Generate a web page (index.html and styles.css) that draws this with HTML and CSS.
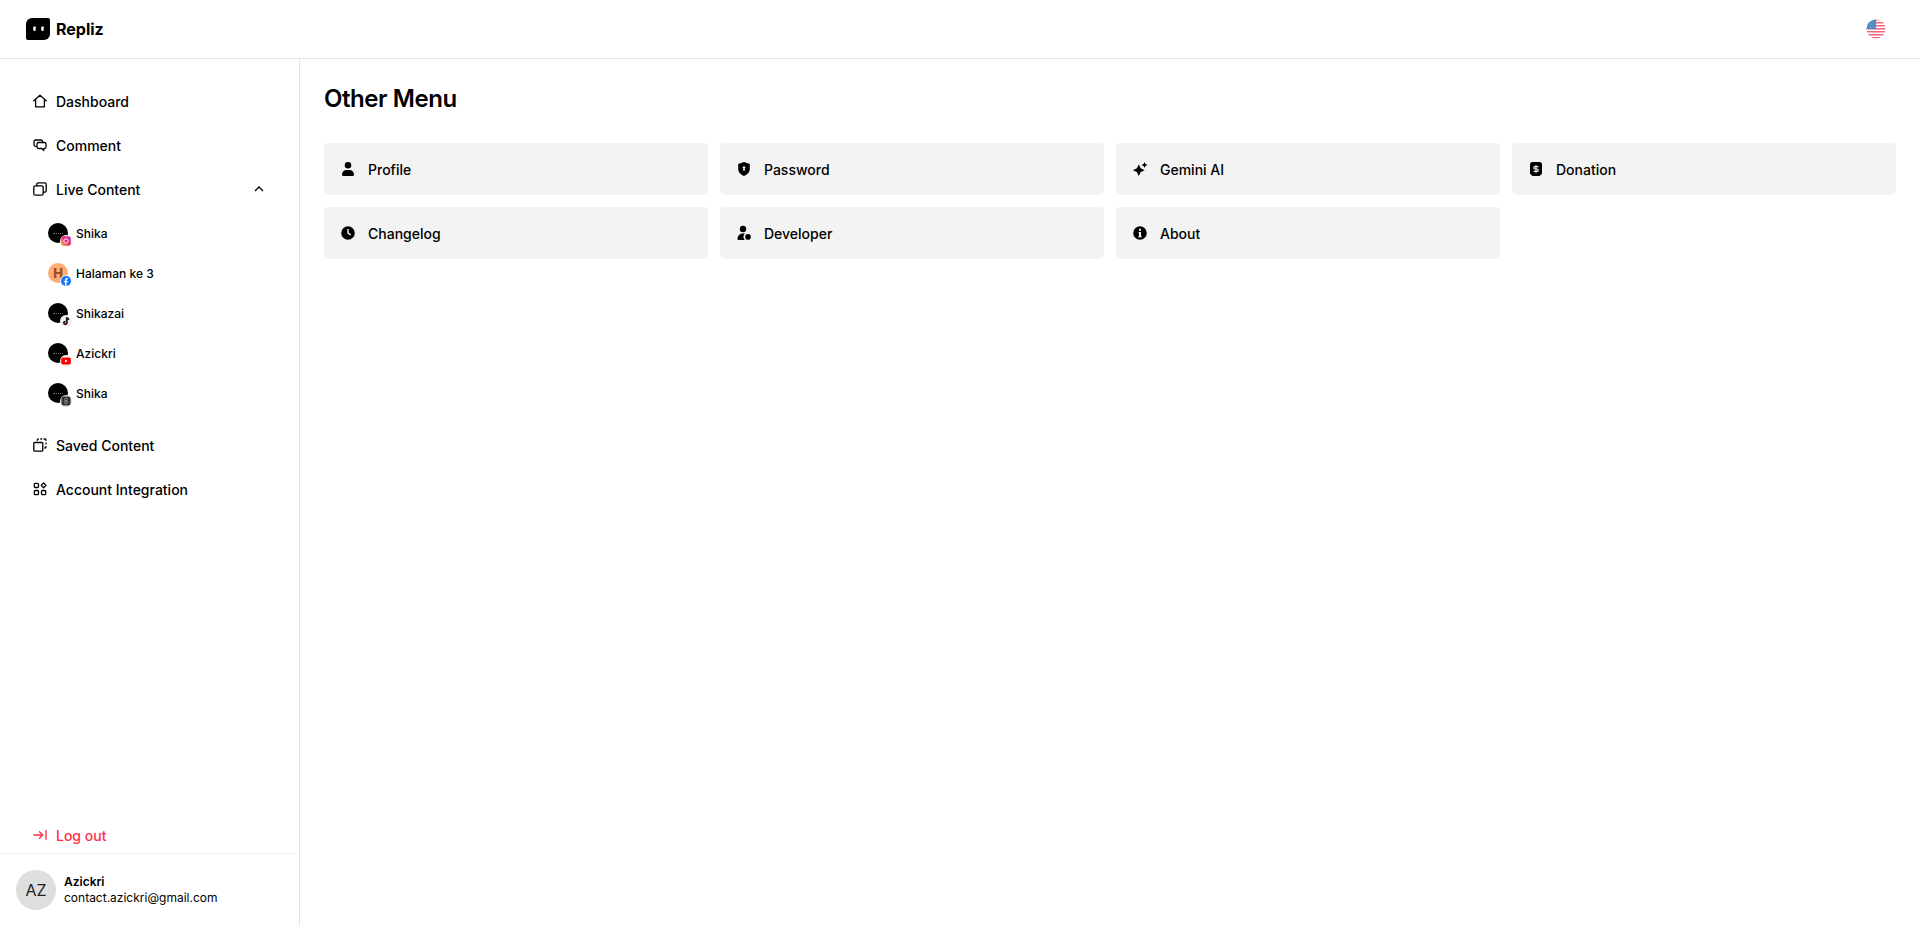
FILE: index.html
```html
<!DOCTYPE html>
<html lang="en">
<head>
<meta charset="utf-8">
<title>Repliz</title>
<link rel="stylesheet" href="styles.css">
</head>
<body>
<header class="topbar">
  <div class="brand">
    <svg class="logo" viewBox="0 0 24 22" width="24" height="22"><path d="M6 0h16a2 2 0 0 1 2 2v14a6 6 0 0 1-6 6H2a2 2 0 0 1-2-2V6a6 6 0 0 1 6-6z" fill="#000"/><rect x="7.300" y="8.500" width="2.400" height="4.400" rx=".8" fill="#fff"/><rect x="15.300" y="8.500" width="2.400" height="4.400" rx=".8" fill="#fff"/></svg>
    <span class="brand-name">Repliz</span>
  </div>
  <svg class="flag" viewBox="0 0 20 20" width="20" height="20">
    <defs><clipPath id="flagclip"><circle cx="10" cy="10" r="9.500"/></clipPath></defs>
    <g clip-path="url(#flagclip)">
      <rect width="20" height="20" fill="#fff"/>
      <g fill="#f0647a"><rect y="0" width="20" height="1.500"/><rect y="3" width="20" height="1.500"/><rect y="6" width="20" height="1.500"/><rect y="9" width="20" height="1.500"/><rect y="12" width="20" height="1.500"/><rect y="15" width="20" height="1.500"/><rect y="18" width="20" height="1.500"/></g>
      <rect width="10" height="10" fill="#4a86c0"/>
      <g fill="#a9c8e6"><circle cx="3" cy="7" r=".6"/><circle cx="5" cy="5" r=".6"/><circle cx="7" cy="3" r=".6"/><circle cx="7" cy="7" r=".6"/><circle cx="3" cy="3.500" r=".6"/><circle cx="5" cy="8.500" r=".6"/><circle cx="9" cy="5" r=".6"/><circle cx="9" cy="8.500" r=".6"/></g>
    </g>
  </svg>
</header>
<div class="shell">
  <aside class="sidebar">
    <nav class="nav">
      <a class="nav-item"><svg class="nav-icon" viewBox="0 0 14 14"><path d="M.8 6.800 7 1.200l6.200 5.600M2.600 5.400v7.400h8.800V5.400"/></svg><span>Dashboard</span></a>
      <a class="nav-item"><svg class="nav-icon" viewBox="0 0 14 14"><path d="M9.500 3.800v-.3A1.500 1.500 0 0 0 8 2H2.500A1.500 1.500 0 0 0 1 3.500v3.300a1.500 1.500 0 0 0 1.500 1.500h1"/><path d="M5.500 4.500h6A1.500 1.500 0 0 1 13 6v3a1.500 1.500 0 0 1-1.500 1.500h-.7V12.500L8.800 10.500H5.500A1.500 1.500 0 0 1 4 9V6a1.500 1.500 0 0 1 1.500-1.500z"/></svg><span>Comment</span></a>
      <a class="nav-item"><svg class="nav-icon" viewBox="0 0 14 14"><rect x=".8" y="3.800" width="9.400" height="9.400" rx="1.500"/><path d="M3.800 3.800V2.300A1.500 1.500 0 0 1 5.300.8h6.400a1.500 1.500 0 0 1 1.500 1.500v6.400a1.500 1.500 0 0 1-1.500 1.500h-1.500"/></svg><span class="grow">Live Content</span><svg class="chevron" viewBox="0 0 12 12"><path d="M2 8l4-4 4 4"/></svg></a>
      <div class="sub">
        <a class="sub-item"><span class="avatar-wrap"><span class="pic"><span class="scribble"></span></span><span class="badge"><svg viewBox="0 0 10 10"><defs><linearGradient id="ig" x1="0" y1="1" x2="1" y2="0"><stop offset="0" stop-color="#fdb32b"/><stop offset=".5" stop-color="#f0276f"/><stop offset="1" stop-color="#b832c9"/></linearGradient></defs><rect x=".2" y=".2" width="9.600" height="9.600" rx="2.500" fill="url(#ig)"/><circle cx="5" cy="5" r="2.200" fill="none" stroke="#fff" stroke-width=".9"/></svg></span></span><span>Shika</span></a>
        <a class="sub-item"><span class="avatar-wrap"><span class="pic pic-h">H</span><span class="badge"><svg viewBox="0 0 10 10"><circle cx="5" cy="5" r="5" fill="#1877f2"/><path d="M5.500 10V6.300h1.200l.2-1.400H5.500V4c0-.4.200-.7.700-.7h.8V2.100c-.3 0-.7-.1-1-.1-1.100 0-1.900.7-1.900 1.900v1H3v1.400h1.100V10z" fill="#fff"/></svg></span></span><span>Halaman ke 3</span></a>
        <a class="sub-item"><span class="avatar-wrap"><span class="pic"><span class="scribble"></span></span><span class="badge"><svg viewBox="0 0 10 10"><path d="M5.800 1v5.500a1.500 1.500 0 1 1-1.500-1.500M5.800 1c.2 1.200 1 1.900 2.200 2" fill="none" stroke="#25e3de" stroke-width="1.300" transform="translate(-.5 .3)"/><path d="M5.800 1v5.500a1.500 1.500 0 1 1-1.500-1.500M5.800 1c.2 1.200 1 1.900 2.200 2" fill="none" stroke="#fb2c55" stroke-width="1.300" transform="translate(.5 .3)"/><path d="M5.800 1v5.500a1.500 1.500 0 1 1-1.500-1.500M5.800 1c.2 1.200 1 1.900 2.200 2" fill="none" stroke="#000" stroke-width="1.200" transform="translate(0 .3)"/></svg></span></span><span>Shikazai</span></a>
        <a class="sub-item"><span class="avatar-wrap"><span class="pic"><span class="scribble"></span></span><span class="badge"><svg viewBox="0 0 10 10"><rect x=".2" y="1.500" width="9.600" height="7" rx="1.800" fill="#f00"/><path d="M4 3.500v3L6.700 5z" fill="#fff"/></svg></span></span><span>Azickri</span></a>
        <a class="sub-item"><span class="avatar-wrap"><span class="pic"><span class="scribble"></span></span><span class="badge badge-dark"><svg viewBox="0 0 10 10"><rect x=".5" y=".5" width="9" height="9" rx="2" fill="#333"/><circle cx="5" cy="3.600" r="1.400" fill="none" stroke="#aaa" stroke-width=".7"/><circle cx="5" cy="6.400" r="1.400" fill="none" stroke="#aaa" stroke-width=".7"/></svg></span></span><span>Shika</span></a>
      </div>
      <a class="nav-item"><svg class="nav-icon" viewBox="0 0 14 14"><path d="M9.800 5.500v6.700a1 1 0 0 1-1 1H1.800a1 1 0 0 1-1-1V5.500a1 1 0 0 1 1-1h7a1 1 0 0 1 1 1z"/><path d="M4.300 2.300V2a1 1 0 0 1 1-1M7.800 1h.8M11 1h1a1 1 0 0 1 1 1v.4M13 5v.8M13 8.400V9a1 1 0 0 1-1 1h-.2"/></svg><span>Saved Content</span></a>
      <a class="nav-item"><svg class="nav-icon" viewBox="0 0 14 14"><rect x="1.300" y="1.300" width="4.200" height="4.200" rx="1"/><rect x="1.300" y="8.500" width="4.200" height="4.200" rx="1"/><rect x="8.500" y="8.500" width="4.200" height="4.200" rx="1"/><path d="M10.600 1 13 3.400l-2.400 2.400-2.400-2.400z"/></svg><span>Account Integration</span></a>
    </nav>
    <a class="logout"><svg class="nav-icon" viewBox="0 0 14 14"><path d="M1 7h8.500M6.500 3.800 9.700 7l-3.200 3.200M13 2.500v9"/></svg><span>Log out</span></a>
    <div class="account">
      <span class="account-avatar">AZ</span>
      <div class="account-text">
        <div class="account-name">Azickri</div>
        <div class="account-mail">contact.azickri@gmail.com</div>
      </div>
    </div>
  </aside>
  <main class="content">
    <h1 class="title">Other Menu</h1>
    <div class="grid">
      <a class="card"><svg class="card-icon" viewBox="0 0 16 16"><circle cx="8" cy="4.300" r="3.300"/><path d="M3.500 15A1.500 1.500 0 0 1 2 13.500C2 11 4 9 6.500 9h3C12 9 14 11 14 13.500a1.500 1.500 0 0 1-1.500 1.500z"/></svg><span>Profile</span></a>
      <a class="card"><svg class="card-icon" viewBox="0 0 16 16"><path fill-rule="evenodd" d="M8 1 13.800 3v4.800c0 3.500-2.500 6-5.800 7.200-3.300-1.200-5.800-3.700-5.800-7.200V3zM8 5.200a1.300 1.300 0 0 0-.7 2.400V10h1.400V7.600A1.300 1.300 0 0 0 8 5.200z"/></svg><span>Password</span></a>
      <a class="card"><svg class="card-icon" viewBox="0 0 16 16"><path d="M6.800 3.500 8.700 7.300l4 1.900-4 1.900-1.900 3.900-1.900-3.900-4-1.900 4-1.900z"/><path d="M12.500 1l.9 2.100 2.100.9-2.100.9-.9 2.100-.9-2.100-2.100-.9 2.100-.9z"/></svg><span>Gemini AI</span></a>
      <a class="card"><svg class="card-icon" viewBox="0 0 16 16"><path d="M4.500 1h7A2.500 2.500 0 0 1 14 3.500v9.300L11.500 15h-7L2 12.800V3.500A2.500 2.500 0 0 1 4.500 1z"/><path d="M10.400 5.600H6.900a1.200 1.200 0 0 0 0 2.400h2.200a1.200 1.200 0 0 1 0 2.400H5.600M8 4.200v7.600" fill="none" stroke="#f3f3f3" stroke-width="1.100"/></svg><span>Donation</span></a>
      <a class="card"><svg class="card-icon" viewBox="0 0 16 16"><path fill-rule="evenodd" d="M8 1.200a6.800 6.800 0 1 1 0 13.600A6.800 6.800 0 0 1 8 1.200zM7.300 4v4.400l3 2 .8-1.100-2.400-1.600V4z"/></svg><span>Changelog</span></a>
      <a class="card"><svg class="card-icon" viewBox="0 0 16 16"><circle cx="7" cy="4" r="3.200"/><path d="M2.500 15a1 1 0 0 1-1-1c0-3 2.200-5.500 5-5.500h2.500c-.9.800-1.500 2-1.500 3.300 0 1.300.5 2.400 1.300 3.200z"/><circle cx="12" cy="11.900" r="2.800"/></svg><span>Developer</span></a>
      <a class="card"><svg class="card-icon" viewBox="0 0 16 16"><path fill-rule="evenodd" d="M8 1.200a6.800 6.800 0 1 1 0 13.600A6.800 6.800 0 0 1 8 1.200zM7 3.800h2v2H7zM6.500 7H9v4.300h.8v1H6.200v-1H7V8h-.5z"/></svg><span>About</span></a>
    </div>
  </main>
</div>
</body>
</html>
```
FILE: styles.css
```css
* { box-sizing: border-box; }
html {
  height: 926px;
  overflow: hidden;
}
body {
  margin: 0;
  height: 926px;
  overflow: hidden;
  background: #fff;
  color: #000;
  font-family: Inter, "Liberation Sans", sans-serif;
  display: flex;
  flex-direction: column;
}
.topbar {
  height: 59px;
  flex: none;
  display: flex;
  align-items: center;
  justify-content: space-between;
  padding: 0 34px 0 26px;
  border-bottom: 1px solid #e4e4e4;
}
.brand { display: flex; align-items: center; gap: 6px; }
.logo { display: block; }
.brand-name { font-size: 16px; font-weight: 700; }
.flag { display: block; }
.shell { flex: 1; display: flex; min-height: 0; }
.sidebar {
  width: 300px;
  flex: none;
  border-right: 1px solid #e4e4e4;
  display: flex;
  flex-direction: column;
}
.nav { flex: 1; padding-top: 20px; }
.nav-item, .logout {
  display: flex;
  align-items: center;
  height: 44px;
  padding: 0 34px 0 33px;
  font-size: 14px;
  font-weight: 500;
  gap: 9px;
}
.nav-icon {
  width: 14px;
  height: 14px;
  flex: none;
  fill: none;
  stroke: currentColor;
  stroke-width: 1.300;
  stroke-linejoin: round;
  stroke-linecap: round;
}
.grow { flex: 1; }
.chevron { width: 12px; height: 12px; fill: none; stroke: #000; stroke-width: 1.300; }
.sub { padding: 2px 0 10px; }
.sub-item {
  display: flex;
  align-items: center;
  height: 40px;
  padding-left: 48px;
  gap: 8px;
  font-size: 12px;
  font-weight: 500;
}
.avatar-wrap { position: relative; width: 20px; height: 20px; flex: none; }
.pic {
  display: flex;
  align-items: center;
  justify-content: center;
  width: 20px;
  height: 20px;
  border-radius: 50%;
  background: #000;
}
.scribble { width: 10px; border-top: 1px dotted #666; }
.pic-h { background: #fdac74; color: #a04a20; font-size: 13px; font-weight: 800; }
.badge {
  position: absolute;
  right: -4px;
  bottom: -4px;
  width: 12px;
  height: 12px;
  padding: 1px;
  border-radius: 50%;
  background: #f1f1f1;
  display: flex;
}
.badge svg { width: 10px; height: 10px; display: block; }
.badge-dark { background: #ddd; }
.logout { height: 36px; color: #ff2d47; flex: none; }
.account {
  height: 73px;
  flex: none;
  display: flex;
  align-items: center;
  gap: 8px;
  padding: 0 16px;
  border-top: 1px solid #f0f0f0;
}
.account-avatar {
  width: 40px;
  height: 40px;
  border-radius: 50%;
  background: #dedede;
  color: #222;
  display: flex;
  align-items: center;
  justify-content: center;
  font-size: 16px;
}
.account-text { font-size: 12px; line-height: 16px; }
.account-name { font-weight: 600; }
.content { flex: 1; padding: 24px; min-width: 0; }
.title { margin: 0 0 28px; font-size: 24px; font-weight: 600; line-height: 32px; letter-spacing: -0.45px; }
.grid { display: grid; grid-template-columns: repeat(4, 1fr); gap: 12px; }
.card {
  height: 52px;
  background: #f3f3f3;
  border-radius: 5px;
  display: flex;
  align-items: center;
  gap: 12px;
  padding: 0 16px;
  font-size: 14px;
  font-weight: 500;
}
.card-icon { width: 16px; height: 16px; fill: #000; flex: none; }
```
